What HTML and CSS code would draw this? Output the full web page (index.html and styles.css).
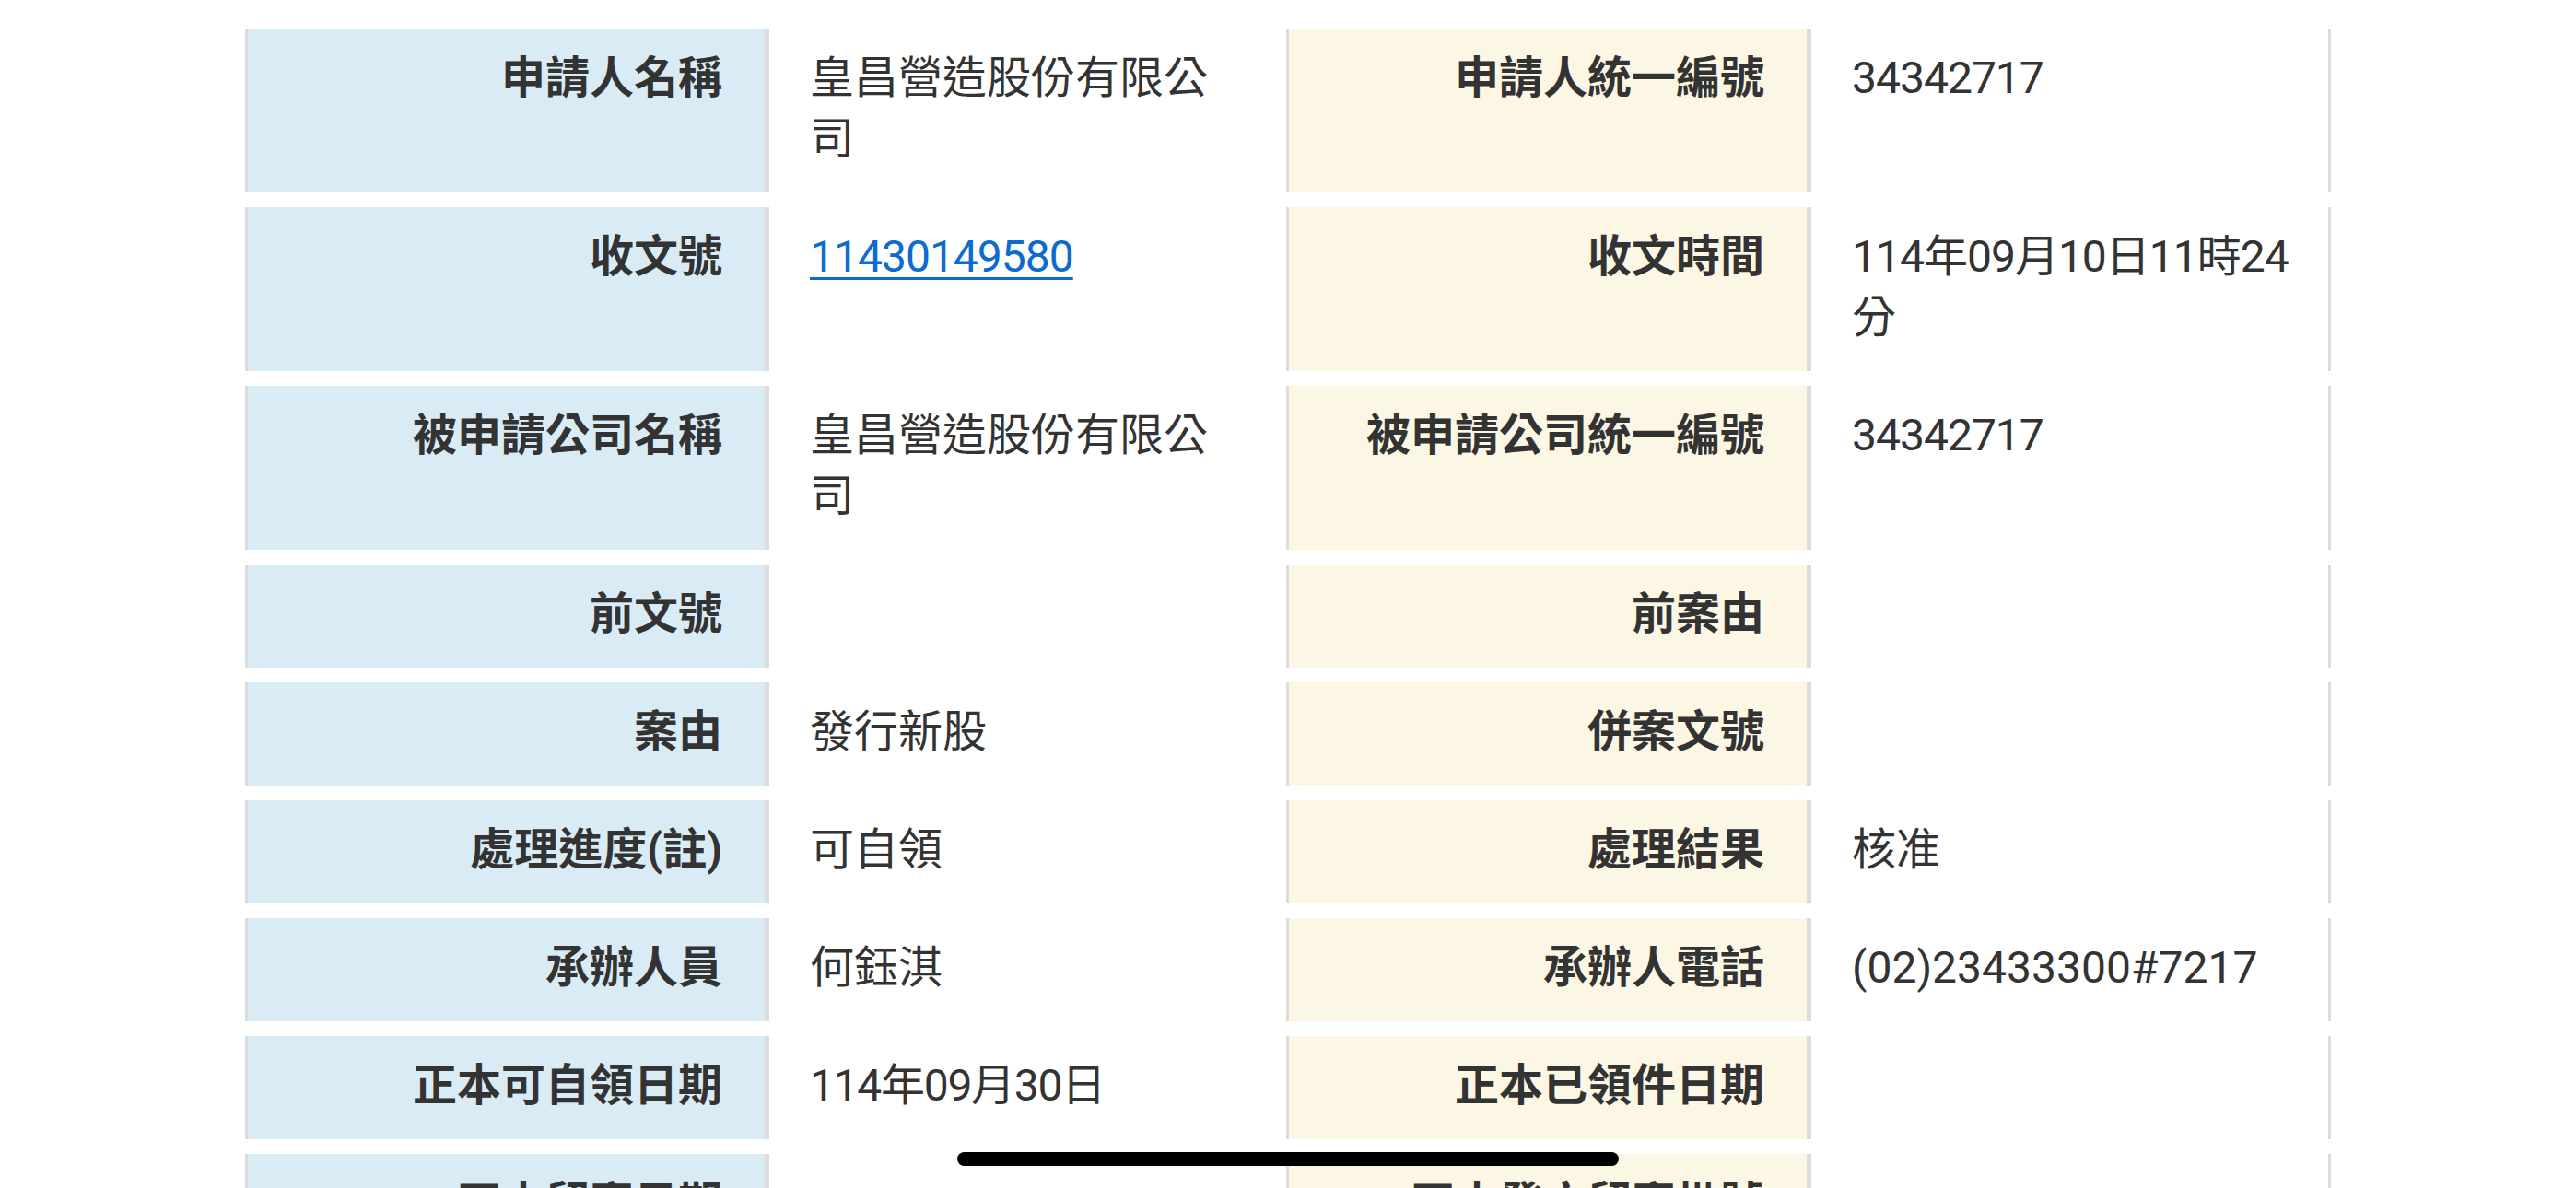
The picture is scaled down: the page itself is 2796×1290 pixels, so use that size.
FILE: index.html
```html
<!DOCTYPE html>
<html lang="zh-Hant">
<head>
<meta charset="utf-8">
<title>公司登記案件資料</title>
<link rel="stylesheet" href="styles.css">
</head>
<body>
<main class="sheet">
  <div class="row">
    <div class="label label-a">申請人名稱</div>
    <div class="value">皇昌營造股份有限公司</div>
    <div class="label label-b">申請人統一編號</div>
    <div class="value value-last"><span class="num">34342717</span></div>
  </div>
  <div class="row">
    <div class="label label-a">收文號</div>
    <div class="value"><a class="link num" href="#">11430149580</a></div>
    <div class="label label-b">收文時間</div>
    <div class="value value-last"><span class="num">114年09月10日11時24分</span></div>
  </div>
  <div class="row">
    <div class="label label-a">被申請公司名稱</div>
    <div class="value">皇昌營造股份有限公司</div>
    <div class="label label-b">被申請公司統一編號</div>
    <div class="value value-last"><span class="num">34342717</span></div>
  </div>
  <div class="row">
    <div class="label label-a">前文號</div>
    <div class="value"></div>
    <div class="label label-b">前案由</div>
    <div class="value value-last"></div>
  </div>
  <div class="row">
    <div class="label label-a">案由</div>
    <div class="value">發行新股</div>
    <div class="label label-b">併案文號</div>
    <div class="value value-last"></div>
  </div>
  <div class="row">
    <div class="label label-a">處理進度(註)</div>
    <div class="value">可自領</div>
    <div class="label label-b">處理結果</div>
    <div class="value value-last">核准</div>
  </div>
  <div class="row">
    <div class="label label-a">承辦人員</div>
    <div class="value">何鈺淇</div>
    <div class="label label-b">承辦人電話</div>
    <div class="value value-last">(02)23433300#7217</div>
  </div>
  <div class="row">
    <div class="label label-a">正本可自領日期</div>
    <div class="value"><span class="num num-date">114年09月30日</span></div>
    <div class="label label-b">正本已領件日期</div>
    <div class="value value-last"></div>
  </div>
  <div class="row">
    <div class="label label-a">正本留案日期</div>
    <div class="value"></div>
    <div class="label label-b">正本發文留案批號</div>
    <div class="value value-last"></div>
  </div>
</main>
<div class="home-indicator"></div>
</body>
</html>
```
FILE: styles.css
```css
html, body {
  margin: 0;
  padding: 0;
  background: #ffffff;
  overflow: hidden;
  height: 100%;
}

body {
  font-family: Roboto, "Noto Sans CJK TC", sans-serif;
  font-size: 48px;
  line-height: 66px;
  color: #333333;
}

.sheet {
  width: 2264px;
  margin: 31px auto 0;
  display: flex;
  flex-direction: column;
  gap: 16px;
}

.row {
  display: grid;
  grid-template-columns: 569px 561px 570px 564px;
}

.label {
  font-weight: 700;
  text-align: right;
  padding: 21px 46px 25px 20px;
  border-left: 3px solid #dcdcdc;
  border-right: 5px solid #dcdcdc;
  color: #333333;
}

.label-a {
  background: #d9ecf6;
}

.label-b {
  background: #fcf7e4;
}

.value {
  padding: 21px 43px 25px 44px;
  font-weight: 400;
}

.value-last {
  border-right: 3px solid #dcdcdc;
}

.num {
  letter-spacing: -1px;
}

.num-date {
  letter-spacing: -1.3px;
}

.link {
  color: #0b6bd0;
  text-decoration: underline;
  text-decoration-thickness: 3px;
  text-underline-offset: 6px;
}

.home-indicator {
  position: fixed;
  left: 50%;
  bottom: 24px;
  width: 718px;
  height: 15px;
  margin-left: -359px;
  border-radius: 8px;
  background: #000000;
}
```
